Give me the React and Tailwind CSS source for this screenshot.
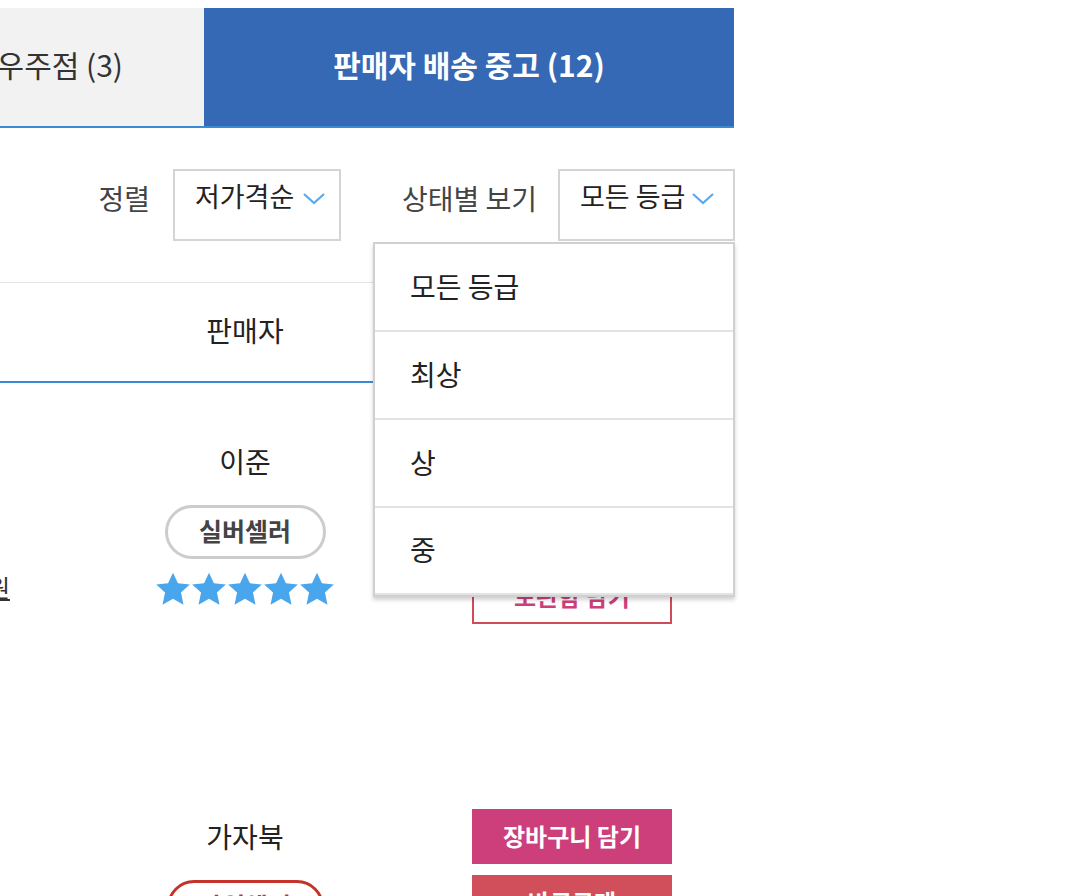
import React from "react";

const font = "font-['Noto_Sans_CJK_KR','Noto_Sans',sans-serif]";

function Chevron() {
  return (
    <svg width="24" height="14" viewBox="0 0 24 14" className="shrink-0">
      <path d="M2 2 L12 11 L22 2" fill="none" stroke="#5aa9ef" strokeWidth="2.2" />
    </svg>
  );
}

function Star() {
  return (
    <svg width="36" height="35" viewBox="0 0 24 23">
      <path
        d="M12 0.3 L15.3 7.3 L23.2 8.2 L17.3 13.5 L19 21.6 L12 17.6 L5 21.6 L6.7 13.5 L0.8 8.2 L8.7 7.3 Z"
        fill="#4aa6ec"
      />
    </svg>
  );
}

const grades = ["모든 등급", "최상", "상", "중"];

function SellerRow({ price, name, badge, badgeRed }) {
  return (
    <div className="flex h-[375px] items-start">
      <div className="flex w-[10px] justify-end pt-[186px]">
        <span className="whitespace-nowrap text-[24px] text-[#333] underline">{price}</span>
      </div>
      <div className="ml-[107px] flex w-[256px] flex-col items-center pt-[58px]">
        <div className="text-[28px] leading-[40px] text-[#222]">{name}</div>
        <div
          className={
            badgeRed
              ? "mt-[24px] flex h-[54px] w-[157px] items-center justify-center rounded-full border-[3px] border-[#c5322a] pb-[2px] text-[25px] font-bold text-[#c5322a]"
              : "mt-[24px] flex h-[54px] w-[161px] items-center justify-center rounded-full border-[3px] border-[#cccccc] pb-[2px] text-[25px] font-bold text-[#444]"
          }
        >
          {badge}
        </div>
        <div className="mt-[13px] flex">
          <Star />
          <Star />
          <Star />
          <Star />
          <Star />
        </div>
      </div>
      <div className="flex flex-col pl-[99px] pt-[51px]">
        <button className="h-[55px] w-[200px] bg-[#cc3f7b] pb-[2px] text-[24px] font-bold text-white">장바구니 담기</button>
        <button className="mt-[11px] h-[55px] w-[200px] bg-[#d04f5a] pb-[2px] text-[24px] font-bold text-white">바로구매</button>
        <button className="mt-[14px] h-[55px] w-[200px] border-2 border-[#d04c5a] bg-white pb-[2px] text-[24px] font-bold text-[#cc3f7b]">
          보관함 담기
        </button>
      </div>
    </div>
  );
}

export default function App() {
  return (
    <div className={`h-[896px] w-[1078px] overflow-hidden bg-white ${font}`}>
      <div className="w-[734px]">
        {/* tabs */}
        <div className="mt-2 flex h-[120px] border-b-2 border-[#3b8ad4]">
          <div className="flex w-[204px] items-center justify-end bg-[#f2f2f2] pb-[6px] pr-[81px]">
            <span className="whitespace-nowrap text-[30px] text-[#333]">우주점 (3)</span>
          </div>
          <div className="flex flex-1 items-center justify-center bg-[#3569b5] pb-[6px]">
            <span className="text-[30px] font-bold text-white">판매자 배송 중고 (12)</span>
          </div>
        </div>

        {/* sort bar */}
        <div className="mr-[-1px] mt-[41px] flex items-start justify-end">
          <span className="pt-[10px] text-[28px] leading-[38px] text-[#444]">정렬</span>
          <div className="ml-[23px] flex h-[72px] w-[168px] items-start gap-[8px] border-2 border-[#d4d4d4] pl-[20px] pt-[6px]">
            <span className="text-[27px] leading-[38px] text-[#222]">저가격순</span>
            <div className="pt-[15px]">
              <Chevron />
            </div>
          </div>
          <span className="ml-[61px] pt-[10px] text-[28px] leading-[38px] text-[#444]">상태별 보기</span>
          <div className="relative ml-[21px]">
            <div className="flex h-[72px] w-[177px] items-start gap-[6px] border-2 border-[#d4d4d4] pl-[20px] pt-[6px]">
              <span className="text-[27px] leading-[38px] text-[#222]">모든 등급</span>
              <div className="pt-[15px]">
                <Chevron />
              </div>
            </div>
            <div className="absolute right-0 top-full z-10 mt-[1px] w-[362px] border-2 border-[#d0d0d0] bg-white shadow-[0_3px_4px_rgba(0,0,0,0.18)]">
              {grades.map((g, i) => (
                <div
                  key={g}
                  className={
                    i < grades.length - 1
                      ? "flex h-[88px] items-center border-b-2 border-[#e3e3e3] pb-[3px] pl-[35px] text-[28px] text-[#222]"
                      : "flex h-[87px] items-center border-b-2 border-[#e3e3e3] pb-[3px] pl-[35px] text-[28px] text-[#222]"
                  }
                >
                  {g}
                </div>
              ))}
            </div>
          </div>
        </div>

        {/* table header */}
        <div className="mt-[41px] flex h-[101px] items-center border-b-2 border-t border-b-[#3b8ad4] border-t-[#e5e5e5] pb-[4px]">
          <div className="ml-[117px] w-[256px] text-center text-[28px] text-[#222]">판매자</div>
        </div>

        <SellerRow price="12,400원" name="이준" badge="실버셀러" />
        <SellerRow price="13,000원" name="가자북" badge="파워셀러" badgeRed />
      </div>
    </div>
  );
}
